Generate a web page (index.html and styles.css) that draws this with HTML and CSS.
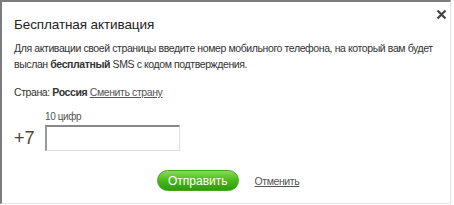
FILE: index.html
```html
<!DOCTYPE html>
<html lang="ru">
  <head>
    <meta charset="UTF-8" />
    <title>Бесплатная активация</title>
    <link rel="stylesheet" href="styles.css">
  </head>
  <body>
    <div class="dialog">
      <a class="close" href="#" title="Закрыть">
        <svg width="11" height="11" viewBox="0 0 11 11">
          <path d="M1.5 1.5 L9.5 9.5 M9.5 1.5 L1.5 9.5" stroke="#444" stroke-width="2.2" />
        </svg>
      </a>
      <h1 class="title">Бесплатная активация</h1>
      <p class="info">
        Для активации своей страницы введите номер мобильного телефона, на который вам будет<br>
        выслан <b>бесплатный</b> SMS с кодом подтверждения.
      </p>
      <p class="country">
        Страна: <b>Россия</b> <a href="#">Сменить страну</a>
      </p>
      <div class="phone">
        <span class="prefix">+7</span>
        <label class="field">
          <span class="hint">10 цифр</span>
          <input type="text" class="phone-input">
        </label>
      </div>
      <div class="actions">
        <button class="send">Отправить</button>
        <a href="#" class="cancel">Отменить</a>
      </div>
    </div>
  </body>
</html>
```

FILE: styles.css
```css
body {
  margin: 0;
  background: #fff;
  font-family: "Liberation Sans", Arial, sans-serif;
  color: #333;
}

.dialog {
  position: relative;
  box-sizing: border-box;
  width: 451px;
  height: 204px;
  border-top: 2px solid #7c7c7c;
  border-left: 2px solid #7c7c7c;
  border-right: 1px solid #e4e4e4;
  border-bottom: 1px solid #e4e4e4;
  padding: 11px 12px 0;
}

.close {
  position: absolute;
  top: 7px;
  right: 3px;
  display: block;
  line-height: 0;
}

.title {
  margin: 0;
  font-size: 13.5px;
  font-weight: normal;
  letter-spacing: -0.1px;
  line-height: 24px;
  color: #222;
}

/* narrow text, close to the original Tahoma */
.info,
.country,
.cancel,
.hint {
  letter-spacing: -0.4px;
}

.info {
  margin: 3px 0 0;
  font-size: 10.5px;
  line-height: 16px;
  white-space: nowrap;
}

.country {
  margin: 13px 0 0;
  font-size: 10.5px;
  line-height: 15px;
}

.country a,
.cancel {
  color: #555;
  text-decoration: underline;
}

.phone {
  display: flex;
  align-items: flex-end;
  margin-top: 11px;
}

.prefix {
  font-size: 18px;
  line-height: 22px;
  color: #444;
  width: 31px;
  padding-bottom: 2px;
}

.field {
  display: flex;
  flex-direction: column;
}

.hint {
  font-size: 10px;
  line-height: 12px;
  color: #555;
  margin-bottom: 2px;
}

.phone-input {
  box-sizing: border-box;
  width: 135px;
  height: 26px;
  margin: 0;
  border: 1px solid #ddd;
  border-top: 2px solid #888;
  border-left: 2px solid #999;
  font-size: 14px;
}

.actions {
  display: flex;
  align-items: center;
  margin-top: 19px;
  padding-left: 143px;
}

.send {
  height: 21px;
  padding: 0 10px;
  border: 1px solid #4aa41e;
  border-radius: 11px;
  background: linear-gradient(#86dc55, #44b515 55%, #2f9c0a);
  color: #fff;
  font-family: "Liberation Sans", Arial, sans-serif;
  font-size: 12px;
  cursor: pointer;
}

.cancel {
  margin-left: 16px;
  font-size: 10.5px;
}
```
